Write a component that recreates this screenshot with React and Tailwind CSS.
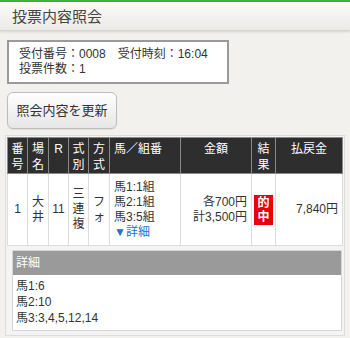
export default function App() {
  const font = { fontFamily: '"Liberation Sans", "Noto Sans CJK JP", sans-serif' };
  const th = 'border border-[#8a8a8a] bg-[#2e2e2e] text-white font-normal align-top pt-[3px] px-0 text-center';
  const td = 'border border-[#dcdcdc] bg-white align-middle text-center px-0';

  return (
    <div style={font} className="w-[350px] h-[338px] overflow-hidden bg-[#f3f1ed] text-[#333] text-[12px] leading-[15px]">
      <div className="h-[2px] bg-[#35b535]" />
      <div className="h-[29px] flex items-center pl-[12px] bg-gradient-to-b from-[#fbfbfa] to-[#ebeae7] border-b border-[#d8d6d1] shadow-[0_1px_2px_rgba(0,0,0,0.12)] text-[15px] text-[#444]">
        投票内容照会
      </div>

      <div className="ml-[7px] mt-[9px] w-[222px] border-2 border-[#9a9a9a] bg-white pl-[10px] py-[5px] text-[12px] leading-[15px]">
        <div>受付番号：0008　受付時刻：16:04</div>
        <div>投票件数：1</div>
      </div>

      <button className="ml-[7px] mt-[8px] w-[110px] h-[37px] rounded-[6px] border border-[#bdbdbd] bg-gradient-to-b from-white to-[#e6e6e6] text-[13px] text-[#333] shadow-[0_1px_1px_rgba(0,0,0,0.08)]">
        照会内容を更新
      </button>

      <div className="mx-[5px] mt-[6px] border border-[#dcdcdc] bg-[#f4f4f4] p-px pb-[4px]">
        <table className="w-full table-fixed border-collapse">
          <colgroup>
            <col className="w-[20px]" />
            <col className="w-[21px]" />
            <col className="w-[20px]" />
            <col className="w-[20px]" />
            <col className="w-[21px]" />
            <col className="w-[71px]" />
            <col className="w-[71px]" />
            <col className="w-[24px]" />
            <col />
          </colgroup>
          <thead>
            <tr className="h-[36px] leading-[16px]">
              <th className={th}>番号</th>
              <th className={th}>場名</th>
              <th className={th}>R</th>
              <th className={th}>式別</th>
              <th className={th}>方式</th>
              <th className={th + ' !text-left pl-[4px]'}>馬／組番</th>
              <th className={th}>金額</th>
              <th className={th}>結果</th>
              <th className={th}>払戻金</th>
            </tr>
          </thead>
          <tbody>
            <tr className="h-[72px]">
              <td className={td}>1</td>
              <td className={td}>大井</td>
              <td className={td}>11</td>
              <td className={td}>三連複</td>
              <td className={td}>フォ</td>
              <td className={td + ' !text-left pl-[4px]'}>
                <div>馬1:1組</div>
                <div>馬2:1組</div>
                <div>馬3:5組</div>
                <div className="text-[#1e6fd0]">▼詳細</div>
              </td>
              <td className={td + ' !text-right pr-[4px]'}>
                <div>各700円</div>
                <div>計3,500円</div>
              </td>
              <td className={td}>
                <div className="mx-auto w-[19px] bg-[#e8000b] text-white font-bold leading-[14px] py-px">的中</div>
              </td>
              <td className={td + ' !text-right pr-[4px]'}>7,840円</td>
            </tr>
          </tbody>
        </table>

        <div className="mt-[4px] ml-[5px] mr-px border border-[#d6d6d6] bg-white">
          <div className="h-[24px] flex items-center pl-[3px] bg-[#9a9a9a] text-white">詳細</div>
          <div className="pl-[3px] pt-[3px] pb-[4px] leading-[16px]">
            <div>馬1:6</div>
            <div>馬2:10</div>
            <div>馬3:3,4,5,12,14</div>
          </div>
        </div>
      </div>
    </div>
  );
}
